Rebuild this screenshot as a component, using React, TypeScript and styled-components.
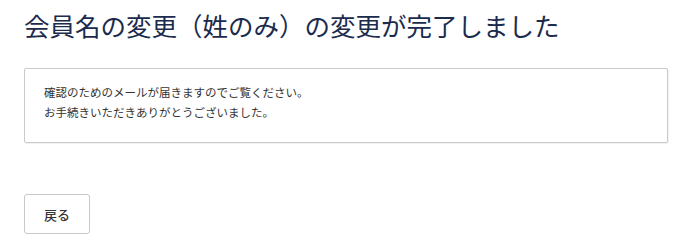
import styled, { createGlobalStyle } from "styled-components";

const GlobalStyle = createGlobalStyle`
  body {
    margin: 0;
    background: #fff;
    font-family: "Noto Sans CJK JP", "Noto Sans", sans-serif;
  }
`;

const App = () => {
  return (
    <Page>
      <GlobalStyle />
      <Title>会員名の変更（姓のみ）の変更が完了しました</Title>
      <MessageBox>
        <Message>確認のためのメールが届きますのでご覧ください。</Message>
        <Message>お手続きいただきありがとうございました。</Message>
      </MessageBox>
      <BackButton type="button">戻る</BackButton>
    </Page>
  );
};

export default App;

const Page = styled.div`
  display: flex;
  flex-direction: column;
  align-items: flex-start;
  padding: 10px 32px 0 24px;
`;

const Title = styled.h1`
  margin: 0 0 28px 0;
  font-size: 25.5px;
  line-height: 30px;
  font-weight: 400;
  color: #1b2b4d;
  letter-spacing: 0;
`;

const MessageBox = styled.div`
  box-sizing: border-box;
  align-self: stretch;
  height: 75px;
  padding: 14px 19px 0;
  border: 1px solid #cacaca;
  border-radius: 2px;
  box-shadow: 1px 1px 1px rgba(0, 0, 0, 0.06);
`;

const Message = styled.p`
  margin: 0;
  font-size: 11.5px;
  line-height: 19.5px;
  color: #333;
`;

const BackButton = styled.button`
  box-sizing: border-box;
  margin-top: 51px;
  width: 66px;
  height: 40px;
  padding: 0;
  background: #fff;
  border: 1px solid #c8c8c8;
  border-radius: 3px;
  font-family: "Noto Sans CJK JP", sans-serif;
  font-size: 13px;
  font-weight: 500;
  color: #333;
  cursor: pointer;
`;
